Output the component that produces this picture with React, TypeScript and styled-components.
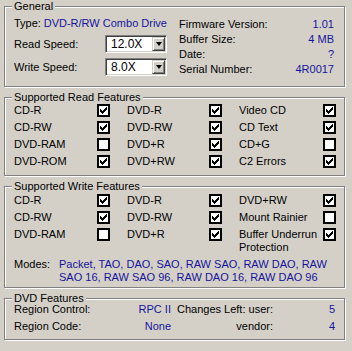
import React from 'react'
import styled, { createGlobalStyle } from 'styled-components'

const Global = createGlobalStyle`
  html, body { margin: 0; padding: 0; background: #d4d0c8; }
  body {
    font-family: "Liberation Sans", Arial, sans-serif;
    font-size: 11px;
    color: #000;
  }
`

const Page = styled.div`
  box-sizing: border-box;
  width: 352px;
  height: 351px;
  padding: 6px 7px 0 4px;
  display: flex;
  flex-direction: column;
  gap: 10px;
  background: #d4d0c8;
  overflow: hidden;
`

const Group = styled.div<{ $pt: number; $pb: number }>`
  position: relative;
  min-width: 0;
  border: 1px solid #808080;
  box-shadow: inset 1px 1px 0 #fff, 1px 1px 0 #fff;
  padding: ${p => p.$pt}px 8px ${p => p.$pb}px 9px;
`

const Legend = styled.span`
  position: absolute;
  top: -7px;
  left: 7px;
  padding: 0 2px;
  line-height: 13px;
  background: #d4d0c8;
`

const Blue = styled.span`
  color: #14149c;
`

const GeneralGrid = styled.div`
  display: grid;
  grid-template-columns: 153px 156px;
  column-gap: 12px;
`

const LeftCol = styled.div`
  display: flex;
  flex-direction: column;
  gap: 5px;
`

const TypeRow = styled.div`
  display: flex;
  line-height: 13px;
  white-space: nowrap;
  & > span:first-child { width: 34px; }
`

const SpeedRow = styled.div`
  display: flex;
  align-items: center;
  justify-content: space-between;
  height: 18px;
  line-height: 13px;
`

const Combo = styled.div`
  box-sizing: border-box;
  width: 62px;
  height: 18px;
  display: flex;
  background: #fff;
  border-top: 1px solid #808080;
  border-left: 1px solid #808080;
  border-bottom: 1px solid #fff;
  border-right: 1px solid #fff;
  box-shadow: inset 1px 1px 0 #404040, inset -1px -1px 0 #d4d0c8;
  padding: 1px;
`

const ComboText = styled.span`
  flex: 1;
  padding-left: 4px;
  line-height: 14px;
  font-size: 12px;
`

const DropBtn = styled.span`
  box-sizing: border-box;
  width: 13px;
  height: 14px;
  background: #d4d0c8;
  border-top: 1px solid #d4d0c8;
  border-left: 1px solid #d4d0c8;
  border-bottom: 1px solid #404040;
  border-right: 1px solid #404040;
  box-shadow: inset 1px 1px 0 #fff, inset -1px -1px 0 #808080;
  display: flex;
  align-items: center;
  justify-content: center;
  &::after {
    content: '';
    border-left: 3px solid transparent;
    border-right: 3px solid transparent;
    border-top: 4px solid #000;
  }
`

const InfoRow = styled.div`
  display: flex;
  justify-content: space-between;
  line-height: 15px;
  padding-right: 1px;
`

const FeatGrid = styled.div`
  display: grid;
  grid-template-columns: 83px 30px 82px 30px 84px 13px;
  align-items: start;
`

const Label = styled.span`
  line-height: 13px;
  padding: 2px 0;
`

const Box = styled.span`
  box-sizing: border-box;
  width: 13px;
  height: 13px;
  margin-top: 2px;
  border: 2px solid #000;
  background: #fff;
  display: block;
  & svg { display: block; margin: 1px 0 0 1px; }
`

const Modes = styled.div`
  display: flex;
  line-height: 13px;
  margin-top: 2px;
  & > span:first-child { width: 45px; flex-shrink: 0; }
`

const DvdGrid = styled.div`
  display: grid;
  grid-template-columns: 157px 90px 50px;
  column-gap: 12px;
  row-gap: 4px;
  line-height: 13px;
  & > * { display: flex; justify-content: space-between; white-space: nowrap; }
`

const Right = styled.div`
  justify-content: flex-end !important;
`

const cols = [0, 1, 2, 3, 4, 5, 6]
const tops = [2, 3, 4, 3, 2, 1, 0]

const Check: React.FC<{ on: boolean }> = ({ on }) => (
  <Box>
    {on && (
      <svg width="7" height="7" viewBox="0 0 7 7" shapeRendering="crispEdges">
        {cols.map(c => <rect key={c} x={c} y={tops[c]} width="1" height="3" fill="#000" />)}
      </svg>
    )}
  </Box>
)

type Feat = [string, boolean]

const readFeats: Feat[][] = [
  [['CD-R', true], ['DVD-R', true], ['Video CD', true]],
  [['CD-RW', true], ['DVD-RW', true], ['CD Text', true]],
  [['DVD-RAM', false], ['DVD+R', true], ['CD+G', false]],
  [['DVD-ROM', true], ['DVD+RW', true], ['C2 Errors', true]],
]

const writeFeats: Feat[][] = [
  [['CD-R', true], ['DVD-R', true], ['DVD+RW', true]],
  [['CD-RW', true], ['DVD-RW', true], ['Mount Rainier', false]],
  [['DVD-RAM', false], ['DVD+R', true], ['Buffer Underrun Protection', true]],
]

const FeatureRows: React.FC<{ rows: Feat[][] }> = ({ rows }) => (
  <FeatGrid>
    {rows.flat().map(([name, on], i) => (
      <React.Fragment key={i}>
        <Label>{name}</Label>
        <Check on={on} />
      </React.Fragment>
    ))}
  </FeatGrid>
)

const info: [string, string][] = [
  ['Firmware Version:', '1.01'],
  ['Buffer Size:', '4 MB'],
  ['Date:', '?'],
  ['Serial Number:', '4R0017'],
]

export default function App() {
  return (
    <Page>
      <Global />
      <Group $pt={10} $pb={9}>
        <Legend>General</Legend>
        <GeneralGrid>
          <LeftCol>
            <TypeRow>
              <span>Type:</span>
              <Blue>DVD-R/RW Combo Drive</Blue>
            </TypeRow>
            <SpeedRow>
              <span>Read Speed:</span>
              <Combo><ComboText>12.0X</ComboText><DropBtn /></Combo>
            </SpeedRow>
            <SpeedRow>
              <span>Write Speed:</span>
              <Combo><ComboText>8.0X</ComboText><DropBtn /></Combo>
            </SpeedRow>
          </LeftCol>
          <div>
            {info.map(([k, v]) => (
              <InfoRow key={k}>
                <span>{k}</span>
                <Blue>{v}</Blue>
              </InfoRow>
            ))}
          </div>
        </GeneralGrid>
      </Group>

      <Group $pt={4} $pb={5}>
        <Legend>Supported Read Features</Legend>
        <FeatureRows rows={readFeats} />
      </Group>

      <Group $pt={5} $pb={3}>
        <Legend>Supported Write Features</Legend>
        <FeatureRows rows={writeFeats} />
        <Modes>
          <span>Modes:</span>
          <Blue>Packet, TAO, DAO, SAO, RAW SAO, RAW DAO, RAW SAO 16, RAW SAO 96, RAW DAO 16, RAW DAO 96</Blue>
        </Modes>
      </Group>

      <Group $pt={4} $pb={6}>
        <Legend>DVD Features</Legend>
        <DvdGrid>
          <div><span>Region Control:</span><Blue>RPC II</Blue></div>
          <Right><span>Changes Left: user:</span></Right>
          <Right><Blue>5</Blue></Right>
          <div><span>Region Code:</span><Blue>None</Blue></div>
          <Right><span>vendor:</span></Right>
          <Right><Blue>4</Blue></Right>
        </DvdGrid>
      </Group>
    </Page>
  )
}
